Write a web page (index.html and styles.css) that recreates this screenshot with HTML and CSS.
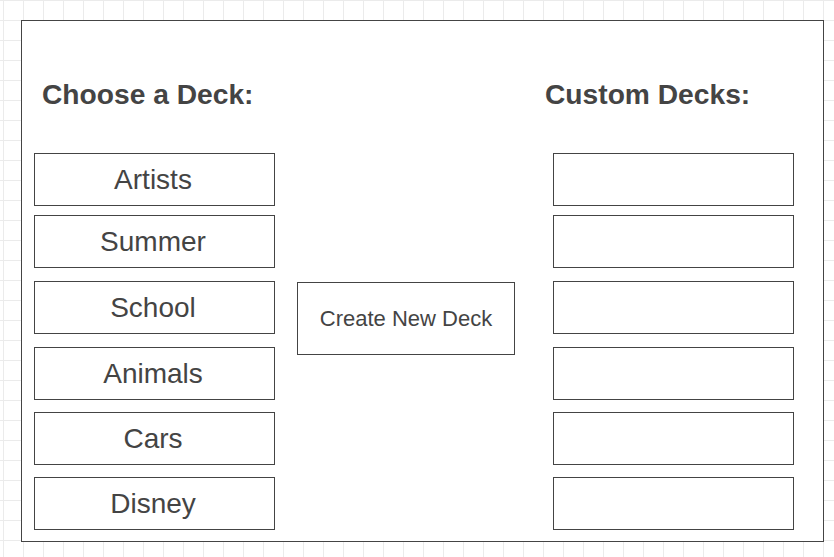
FILE: index.html
```html
<!DOCTYPE html>
<html lang="en">
<head>
<meta charset="utf-8">
<title>Decks</title>
<link rel="stylesheet" href="styles.css">
</head>
<body>
<div class="board">
  <section class="col col-left">
    <h2 class="heading">Choose a Deck:</h2>
    <div class="decks">
      <div class="deck">Artists</div>
      <div class="deck">Summer</div>
      <div class="deck">School</div>
      <div class="deck">Animals</div>
      <div class="deck">Cars</div>
      <div class="deck">Disney</div>
    </div>
  </section>
  <section class="col col-mid">
    <button class="create">Create New Deck</button>
  </section>
  <section class="col col-right">
    <h2 class="heading heading-right">Custom Decks:</h2>
    <div class="decks">
      <div class="deck"></div>
      <div class="deck"></div>
      <div class="deck"></div>
      <div class="deck"></div>
      <div class="deck"></div>
      <div class="deck"></div>
    </div>
  </section>
</div>
</body>
</html>
```
FILE: styles.css
```css
html, body {
  margin: 0;
  padding: 0;
}
body {
  width: 834px;
  height: 557px;
  overflow: hidden;
  background-color: #fff;
  background-image:
    linear-gradient(to right, #ebebeb 1px, transparent 1px),
    linear-gradient(to bottom, #ebebeb 1px, transparent 1px);
  background-size: 20px 20px;
  background-position: 3px 0;
  font-family: "Liberation Sans", Arial, sans-serif;
  color: #444;
}
.board {
  box-sizing: border-box;
  margin: 20px 0 0 21px;
  width: 803px;
  height: 522px;
  background: #fff;
  border: 1px solid #444;
  display: flex;
  align-items: flex-start;
}
.col {
  display: flex;
  flex-direction: column;
}
.col-left {
  margin-left: 12px;
  width: 241px;
}
.col-mid {
  margin-left: 22px;
  width: 218px;
  padding-top: 261px;
}
.col-right {
  margin-left: 38px;
  width: 241px;
}
.heading {
  margin: 57px 0 43px 8px;
  font-size: 28.2px;
  line-height: 32px;
  font-weight: bold;
  white-space: nowrap;
  height: 32px;
}
.heading-right {
  margin-left: -8px;
}
.decks {
  display: flex;
  flex-direction: column;
}
.deck {
  box-sizing: border-box;
  height: 53px;
  border: 1px solid #444;
  background: #fff;
  text-align: center;
  font-size: 28px;
  padding: 1px 3px 0 0;
  line-height: 50px;
}
.deck + .deck {
  margin-top: 12px;
}
.deck:nth-child(2) {
  margin-top: 9px;
}
.deck:nth-child(3),
.deck:nth-child(4) {
  margin-top: 13px;
}
.create {
  box-sizing: border-box;
  width: 218px;
  height: 73px;
  border: 1px solid #444;
  background: #fff;
  color: #444;
  font-family: "Liberation Sans", Arial, sans-serif;
  font-size: 22px;
  padding: 0;
  display: flex;
  align-items: center;
  justify-content: center;
}
```
